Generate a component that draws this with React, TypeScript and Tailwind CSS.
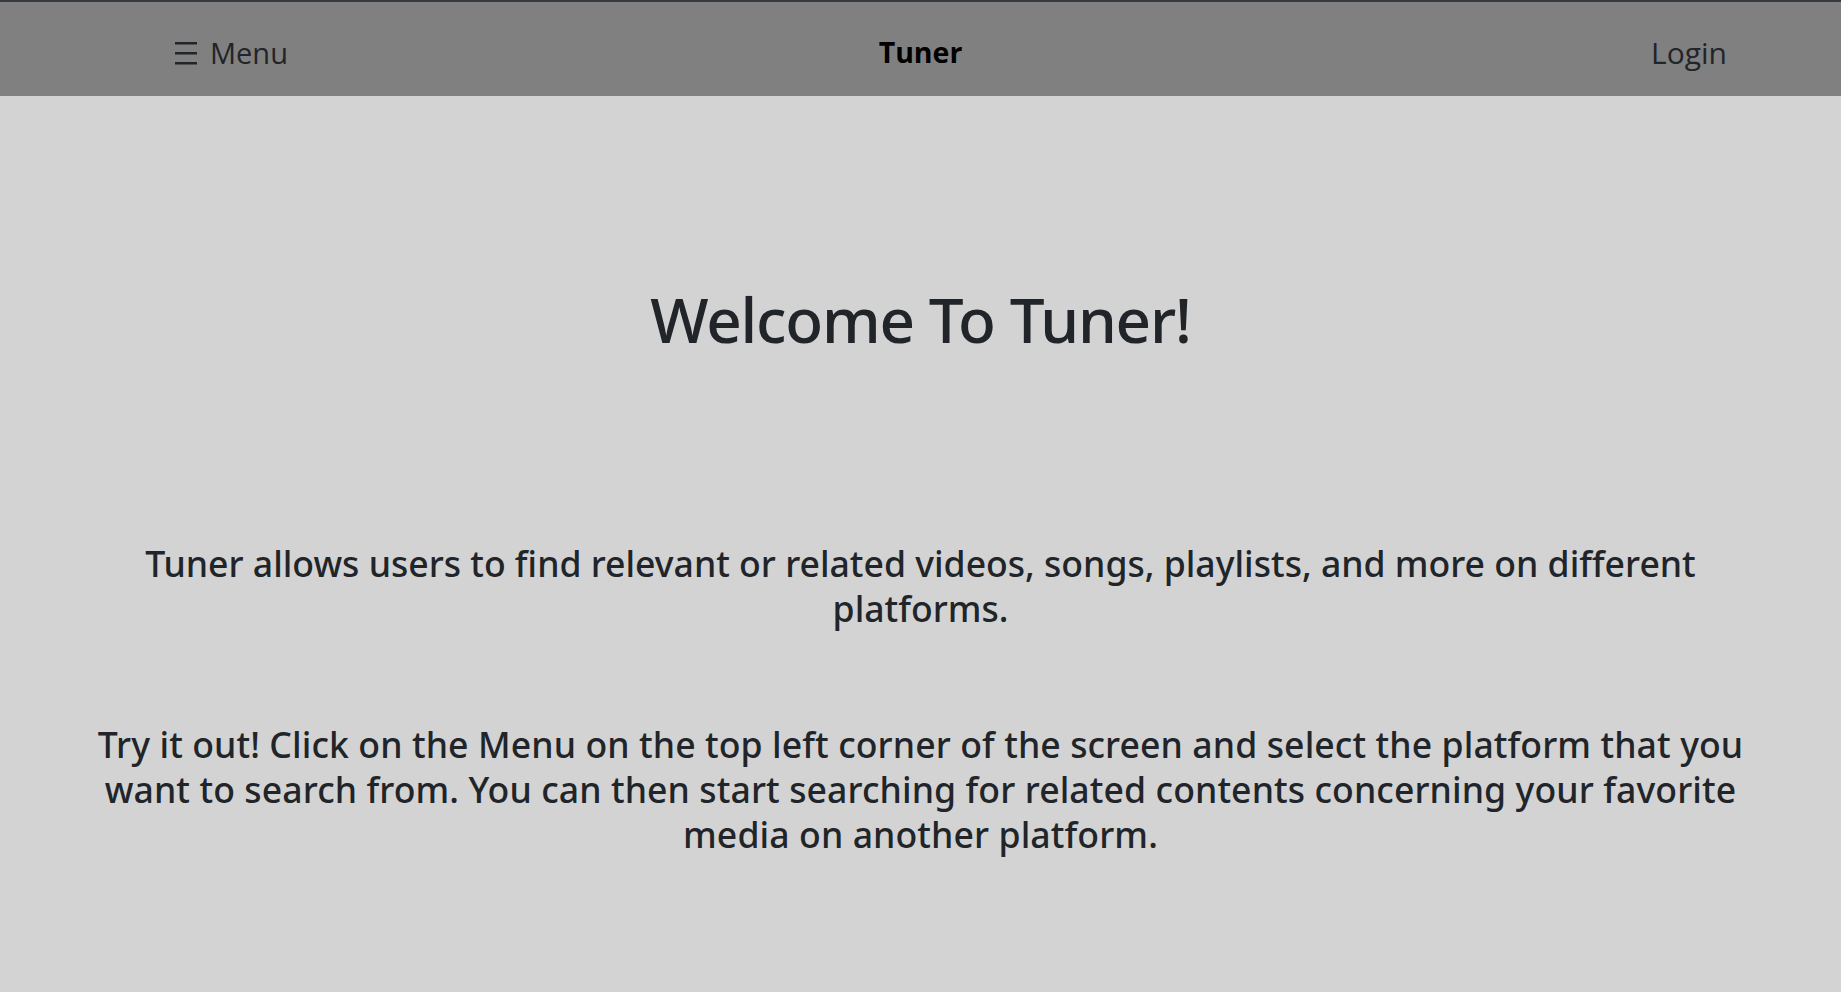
export default function App() {
  return (
    <div className="min-h-screen bg-[#d3d3d3] font-['Noto_Sans','Open_Sans',sans-serif] text-[#212529]">
      <header className="h-[96px] border-t-2 border-[#343a40] bg-[#808080] grid grid-cols-[1fr_auto_1fr] items-center pt-[6px] px-[114px] font-['Open_Sans',sans-serif]">
        <button className="justify-self-start ml-[61px] flex items-center gap-[13px] text-[29px] leading-[45px] text-[#212529]">
          <svg width="22" height="23" viewBox="0 0 22 23" className="mt-[2px]">
            <rect x="0" y="0" width="22" height="2.5" fill="#212529" />
            <rect x="0" y="10" width="22" height="2.5" fill="#212529" />
            <rect x="0" y="20" width="22" height="2.5" fill="#212529" />
          </svg>
          <span>Menu</span>
        </button>
        <div className="text-[28.5px] leading-[45px] font-bold text-black">Tuner</div>
        <button className="justify-self-end text-[30px] leading-[45px] text-[#212529]">Login</button>
      </header>

      <main className="text-center px-[80px]">
        <h1 className="mt-[186px] text-[62px] leading-[1.2] font-medium tracking-[-1.2px]">Welcome To Tuner!</h1>
        <p className="mt-[185px] text-[35.6px] leading-[45px] font-medium">
          Tuner allows users to find relevant or related videos, songs, playlists, and more on different platforms.
        </p>
        <p className="mt-[91px] text-[35.6px] leading-[45px] font-medium tracking-[0.1px]">
          Try it out! Click on the Menu on the top left corner of the screen and select the platform that you want to
          search from. You can then start searching for related contents concerning your favorite media on another
          platform.
        </p>
      </main>
    </div>
  );
}
